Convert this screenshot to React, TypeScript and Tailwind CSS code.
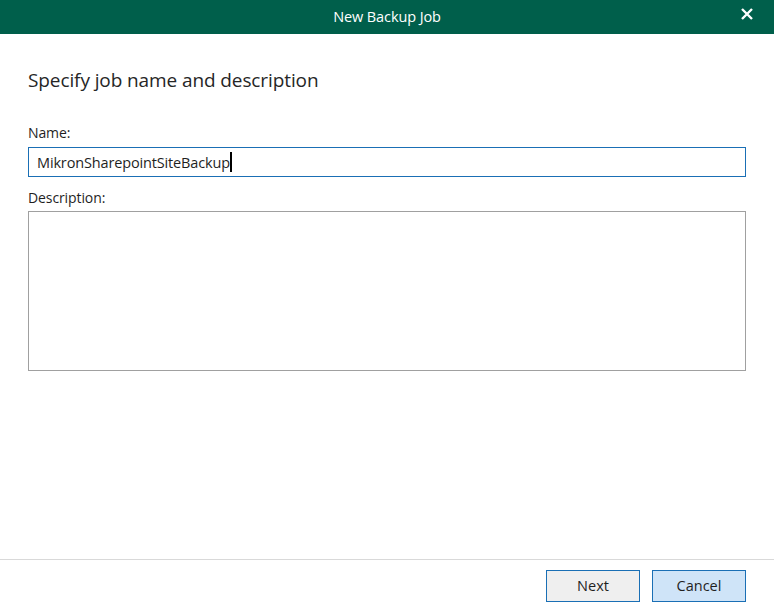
import React, { useState } from "react";

const App: React.FC = () => {
  const [name, setName] = useState("MikronSharepointSiteBackup");
  const [description, setDescription] = useState("");

  return (
    <div
      className="w-[774px] h-[607px] bg-white flex flex-col overflow-hidden"
      style={{ fontFamily: '"Open Sans", "Noto Sans", sans-serif' }}
    >
      {/* title bar */}
      <div className="h-[34px] bg-[#005f4b] flex items-center relative shrink-0">
        <div className="flex-1 text-center text-white text-[14.5px] tracking-[-0.1px]">
          New Backup Job
        </div>
        <button className="absolute right-[20px] top-[7px] text-white">
          <svg width="14" height="14" viewBox="0 0 14 14">
            <path d="M2 2 L12 12 M12 2 L2 12" stroke="white" strokeWidth="2.4" />
          </svg>
        </button>
      </div>

      {/* content */}
      <div className="flex-1 flex flex-col px-[28px] pt-[32px]">
        <h1 className="text-[19px] text-[#262626] leading-[28px] tracking-[-0.1px]">
          Specify job name and description
        </h1>

        <label
          htmlFor="name"
          className="mt-[29px] text-[14px] text-[#1f1f1f] leading-[20px] tracking-[-0.1px]"
        >
          Name:
        </label>
        <div className="relative mt-[4px]">
          <input
            id="name"
            value={name}
            onChange={(e) => setName(e.target.value)}
            className="h-[30px] w-full border border-[#1a6fb5] px-[8px] text-[14.5px] text-[#1f1f1f] tracking-[-0.15px] outline-none caret-transparent"
          />
          {/* caret */}
          <div className="absolute inset-0 px-[9px] flex items-center pointer-events-none text-[14.5px] tracking-[-0.15px]">
            <span className="invisible whitespace-pre">{name}</span>
            <span className="w-[2px] h-[20px] bg-black" />
          </div>
        </div>

        <label
          htmlFor="description"
          className="mt-[11px] text-[14px] text-[#1f1f1f] leading-[20px] tracking-[-0.1px]"
        >
          Description:
        </label>
        <textarea
          id="description"
          value={description}
          onChange={(e) => setDescription(e.target.value)}
          className="mt-[3px] h-[160px] w-full border border-[#a0a0a0] p-[6px] text-[14px] resize-none outline-none"
        />
      </div>

      {/* footer */}
      <div className="h-[48px] border-t border-[#d9d9d9] flex items-start justify-end gap-[12px] pt-[10px] pr-[28px] shrink-0">
        <button className="w-[94px] h-[32px] bg-[#efefef] border border-[#1a6fb5] text-[14.5px] text-[#1f1f1f]">
          Next
        </button>
        <button className="w-[94px] h-[32px] bg-[#cfe4f8] border border-[#1a6fb5] text-[14.5px] text-[#1f1f1f]">
          Cancel
        </button>
      </div>
    </div>
  );
};

export default App;
